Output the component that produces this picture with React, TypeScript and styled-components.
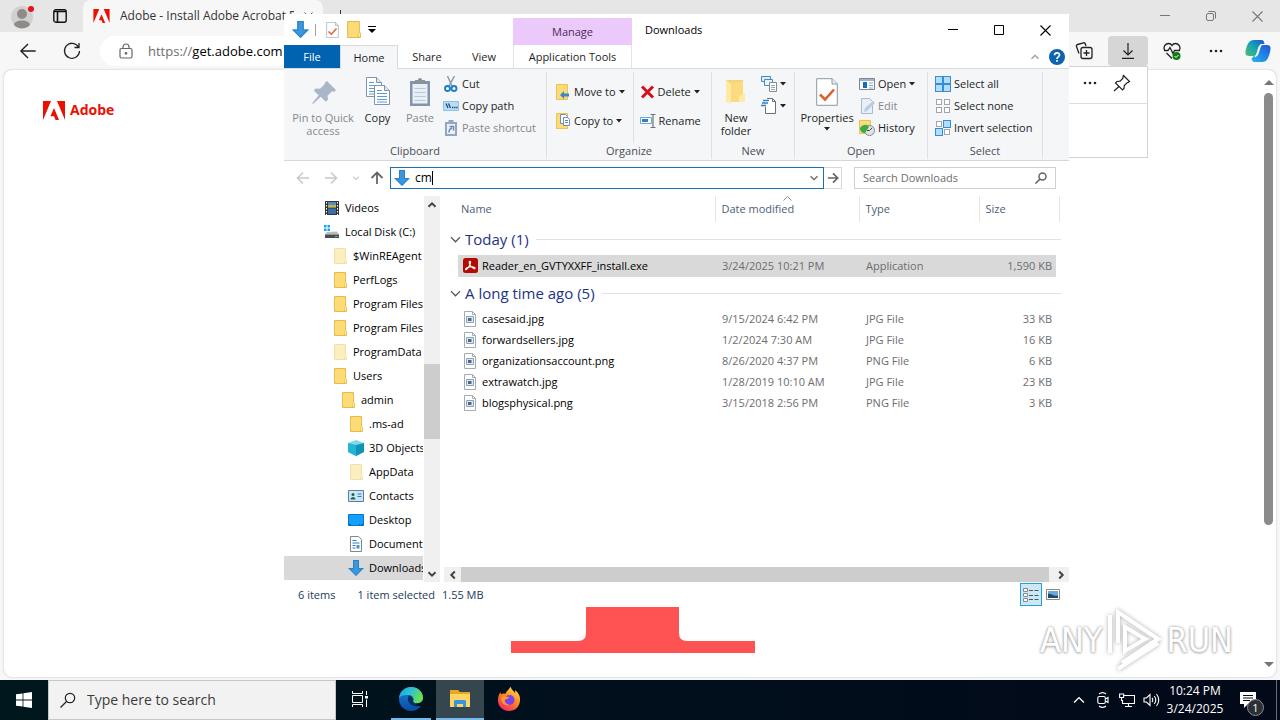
import React from 'react';
import styled, { createGlobalStyle, css } from 'styled-components';

const GlobalStyle = createGlobalStyle`
  *, *::before, *::after { box-sizing: border-box; }
  body { margin: 0; overflow: hidden; }
  body, button, input, table { font-family: 'Open Sans', 'Noto Sans', sans-serif; font-size: 11px; line-height: 14px; }
  button { border: 0; padding: 0; margin: 0; background: none; color: inherit; }
  input { border: 0; outline: 0; padding: 0; margin: 0; background: none; min-width: 0; }
  a { color: inherit; text-decoration: none; }
  svg { display: block; flex: none; }
`;

/* ---------- desktop ---------- */

const Desktop = styled.div`
  position: relative;
  display: flex;
  flex-direction: column;
  height: 100vh;
  overflow: hidden;
  background: #f3f3f5;
`;

/* ---------- browser ---------- */

const Browser = styled.section`
  flex: 1;
  min-height: 0;
  display: flex;
  flex-direction: column;
  background: #f7f7f7;
`;

const BrowserTitle = styled.header`
  display: flex;
  align-items: center;
  height: 32px;
  background: #e6e6e6;
`;

const TitleTools = styled.div`
  display: flex;
  align-items: center;
  gap: 18px;
  width: 83px;
  padding-left: 11px;
`;

const BrowserTab = styled.button`
  display: flex;
  align-items: center;
  gap: 10px;
  width: 240px;
  height: 32px;
  padding: 0 10px;
  border-radius: 8px 8px 0 0;
  background: #f7f7f7;
  color: #333;
  font-size: 12px;
  white-space: nowrap;
`;

const TabLabel = styled.span`
  flex: 1;
  overflow: hidden;
  text-align: left;
`;

const Plain = styled.button`
  display: flex;
  align-items: center;
  justify-content: center;
`;

const NewTab = styled(Plain)`
  width: 34px;
  height: 32px;
`;

const WindowControls = styled.div<{ $w: number; $end?: number }>`
  display: flex;
  margin-left: auto;
  padding-right: ${(p) => p.$end || 0}px;
  button { width: ${(p) => p.$w}px; height: 32px; }
`;

const BrowserBar = styled.div`
  display: flex;
  align-items: center;
  height: 38px;
  padding: 0 9px 0 16px;
`;

const BarGlyph = styled.span`
  display: flex;
  width: 44px;
  padding-left: 3px;
`;

const BarButton = styled(Plain)<{ $active?: boolean }>`
  width: 40px;
  height: 30px;
  border-radius: 4px;
  background: ${(p) => (p.$active ? '#d6d6d6' : 'transparent')};
`;

const BarButtons = styled.div`
  display: flex;
  gap: 4px;
  margin-right: 9px;
`;

const UrlPill = styled.label`
  flex: 1;
  display: flex;
  align-items: center;
  gap: 15px;
  height: 30px;
  margin: 0 50px 0 -4px;
  padding-left: 19px;
  border-radius: 15px;
  background: #fff;
  font-size: 13px;
  color: #000;
  i { font-style: normal; color: #6d6d6d; }
`;

const Page = styled.main`
  flex: 1;
  display: flex;
  margin: 0 4px 3px;
  border-radius: 8px;
  background: #fff;
  box-shadow: 0 0 2px #b5b5b5;
`;

const PageBody = styled.div`
  flex: 1;
  display: flex;
  flex-direction: column;
  justify-content: space-between;
  padding: 30px 0 24px;
`;

const AdobeLink = styled.a`
  display: flex;
  align-items: center;
  gap: 5px;
  padding-left: 39px;
  color: #eb1000;
  font-size: 14px;
  line-height: 20px;
  font-weight: 700;
`;

const Pedestal = styled.svg`
  align-self: center;
`;

const PageScroll = styled.div`
  display: flex;
  flex-direction: column;
  align-items: center;
  width: 15px;
  padding: 10px 0;
`;

const PageThumb = styled.div`
  width: 9px;
  height: 432px;
  margin: 8px 0 auto;
  border-radius: 5px;
  background: #8b8b8b;
`;

const Flyout = styled.aside`
  position: absolute;
  top: 66px;
  right: 132px;
  width: 360px;
  height: 92px;
  border: 1px solid #d4d4d4;
  background: #fff;
`;

const FlyoutHead = styled.div`
  display: flex;
  justify-content: flex-end;
  align-items: center;
  gap: 16px;
  height: 37px;
  padding: 0 16px 4px;
  border-bottom: 1px solid #dedede;
`;

/* ---------- explorer window ---------- */

const Explorer = styled.section`
  position: absolute;
  top: 14px;
  left: 284px;
  right: 211px;
  bottom: 113px;
  display: flex;
  flex-direction: column;
  background: #fff;
  color: #1e1e1e;
`;

const ExplorerTitle = styled.header`
  display: flex;
  align-items: stretch;
  height: 31px;
`;

const QuickAccess = styled.div`
  display: flex;
  align-items: center;
  width: 229px;
  padding-left: 8px;
  gap: 6px;
`;

const QuickRule = styled.span`
  width: 1px;
  height: 12px;
  background: #a5a5a5;
`;

const QuickIcon = styled.span`
  padding-left: 4px;
`;

const ManageTab = styled.div`
  width: 119px;
  margin-top: 4px;
  background: #ebc9fb;
  color: #4b2c58;
  line-height: 28px;
  text-align: center;
`;

const WindowName = styled.h1`
  margin: 0 0 0 13px;
  font-size: 11px;
  line-height: 31px;
  font-weight: 400;
  color: #000;
`;

const RibbonTabs = styled.nav`
  display: flex;
  align-items: stretch;
  height: 24px;
  border-bottom: 1px solid #dadbdc;
`;

const RibbonTab = styled.button<{ $w: number; $kind?: 'file' | 'open' | 'tool' }>`
  width: ${(p) => p.$w}px;
  padding-top: 1px;
  ${(p) => p.$kind === 'file' && css`background: #0063b1; color: #fff;`}
  ${(p) => p.$kind === 'open' && css`
    height: 24px;
    background: #f5f6f7;
    border: 1px solid #dadbdc;
    border-bottom: 0;
  `}
  ${(p) => p.$kind === 'tool' && css`
    margin-left: 1px;
    border: solid #e6e0ea;
    border-width: 0 1px;
  `}
`;

const RibbonEnd = styled.div`
  display: flex;
  align-items: center;
  gap: 9px;
  margin-left: auto;
  padding-right: 4px;
`;

const Ribbon = styled.div`
  display: flex;
  height: 92px;
  padding-top: 1px;
  border-bottom: 1px solid #d5d7d9;
  background: #f4f6f8;
`;

const Group = styled.section<{ $w: number }>`
  display: flex;
  flex-direction: column;
  width: ${(p) => p.$w}px;
  margin: 2px 0 1px;
  border-right: 1px solid #dfe1e4;
`;

const GroupBody = styled.div<{ $pad?: number; $gap?: number }>`
  flex: 1;
  display: flex;
  gap: ${(p) => p.$gap || 0}px;
  padding-left: ${(p) => p.$pad || 0}px;
`;

const GroupName = styled.h2`
  margin: 0;
  font-size: 11px;
  line-height: 16px;
  font-weight: 400;
  text-align: center;
  color: #4a4f56;
`;

const BigButton = styled.button<{ $w: number; $dim?: boolean }>`
  display: flex;
  flex-direction: column;
  align-items: center;
  width: ${(p) => p.$w}px;
  padding-top: 5px;
  line-height: 13px;
  white-space: nowrap;
  color: ${(p) => (p.$dim ? '#84888e' : '#1e1e1e')};
  svg:first-child { margin-bottom: 4px; }
`;

const CaretLine = styled.span`
  display: flex;
  align-items: center;
  height: 13px;
`;

const Stack = styled.div<{ $row?: number; $ruled?: boolean }>`
  display: flex;
  flex-direction: column;
  padding-top: ${(p) => (p.$row === 29 ? 5 : 1)}px;
  ${(p) => p.$ruled && css`padding-right: 8px; margin-right: 6px; border-right: 1px solid #dfe1e4;`}
  button { height: ${(p) => p.$row || 22}px; }
`;

const SmallButton = styled.button<{ $dim?: boolean }>`
  display: flex;
  align-items: center;
  gap: 3px;
  white-space: nowrap;
  color: ${(p) => (p.$dim ? '#84888e' : '#1e1e1e')};
`;

const AddressRow = styled.div`
  display: flex;
  align-items: center;
  height: 35px;
  padding: 0 13px 2px 0;
`;

const NavButtons = styled.div`
  display: flex;
  align-items: center;
  width: 106px;
  padding-left: 12px;
  gap: 14px;
  button:last-child { margin-left: -4px; }
`;

const AddressBox = styled.label`
  flex: 1;
  display: flex;
  align-items: center;
  gap: 5px;
  height: 22px;
  padding: 0 4px 0 3px;
  border: 1px solid #1a6fb5;
  input {
    flex: 1;
    height: 18px;
    font-size: 12px;
    color: #000;
    background: linear-gradient(#000, #000) 17px 2px / 1px 14px no-repeat;
  }
`;

const GoButton = styled(Plain)`
  width: 18px;
  height: 22px;
  border: 1px solid #d9d9d9;
  border-left: 0;
`;

const SearchBox = styled.label`
  display: flex;
  align-items: center;
  width: 202px;
  height: 22px;
  margin-left: 12px;
  padding: 0 8px;
  border: 1px solid #d0d0d0;
  input { flex: 1; }
  input::placeholder { color: #6d6d6d; opacity: 1; }
`;

const Panes = styled.div`
  flex: 1;
  min-height: 0;
  display: flex;
`;

const Tree = styled.nav`
  width: 140px;
  overflow: hidden;
`;

const TreeItem = styled.a<{ $level: number; $on?: boolean }>`
  display: flex;
  align-items: center;
  gap: 5px;
  height: 24px;
  margin-right: 1px;
  padding-left: ${(p) => 40 + p.$level * 8}px;
  overflow: hidden;
  white-space: nowrap;
  color: #000;
  background: ${(p) => (p.$on ? '#d9d9d9' : 'transparent')};
`;

const IconSlot = styled.span`
  display: flex;
  justify-content: center;
  flex: none;
  width: 16px;
`;

const VScroll = styled.div`
  display: flex;
  flex-direction: column;
  justify-content: space-between;
  align-items: center;
  width: 16px;
  margin-right: 4px;
  background: #f0f0f0;
  button { width: 16px; height: 17px; }
`;

const VThumb = styled.div`
  width: 16px;
  height: 75px;
  margin: 151px 0 auto;
  background: #cdcdcd;
`;

const Files = styled.div`
  flex: 1;
  min-width: 0;
  display: flex;
  flex-direction: column;
  justify-content: space-between;
`;

const FileTable = styled.table`
  width: 100%;
  table-layout: fixed;
  border-collapse: collapse;
  td, th { padding: 0; font-weight: 400; text-align: left; white-space: nowrap; }
`;

const HeadRow = styled.tr`
  height: 26px;
  color: #4c607a;
  th { position: relative; padding-left: 6px; border-right: 1px solid #e5e5e5; }
  th:nth-child(2) { padding-left: 3px; }
  th:first-child { border: 0; }
  th:last-child { border: 0; background: linear-gradient(#e5e5e5, #e5e5e5) 3px 0 / 1px 100% no-repeat; }
`;

const BareHead = styled.th`
  && { border-right: 0; }
`;

const SortMark = styled.svg`
  position: absolute;
  top: 0;
  left: 50%;
  margin-left: -4px;
`;

const GroupRow = styled.tr<{ $h: number }>`
  height: ${(p) => p.$h}px;
  color: #1e3287;
`;

const GroupLine = styled.button`
  display: flex;
  align-items: center;
  gap: 3px;
  width: 100%;
  padding: 1px 8px 0 5px;
  font-size: 15px;
  line-height: 20px;
  &::after { content: ''; flex: 1; height: 1px; margin-left: 4px; background: #e2e2e2; }
`;

const FileRow = styled.tr<{ $on?: boolean }>`
  height: ${(p) => (p.$on ? 22 : 21)}px;
  color: #6d6d6d;
  td:nth-child(n + 3) { padding-left: 7px; }
  td:nth-child(2) { padding-left: 4px; color: #000; }
  td:nth-child(5) { padding: 0 4px 0 0; text-align: right; }
  td:nth-child(n + 2):nth-child(-n + 5) { background: ${(p) => (p.$on ? '#d9d9d9' : 'transparent')}; }
`;

const FileName = styled.span`
  display: flex;
  align-items: center;
  gap: 4px;
`;

const HScroll = styled.div`
  display: flex;
  height: 15px;
  background: #f0f0f0;
  button { width: 17px; }
`;

const HThumb = styled.div`
  flex: 1;
  margin-right: 3px;
  background: #cdcdcd;
`;

const Status = styled.footer`
  display: flex;
  align-items: center;
  height: 25px;
  padding: 0 9px 0 14px;
  color: #1e395b;
  span { margin-right: 7px; }
  span:first-child { margin-right: 22px; }
`;

const ViewButtons = styled.div`
  display: flex;
  align-items: center;
  gap: 4px;
  margin-left: auto;
`;

const ViewButton = styled(Plain)<{ $on?: boolean }>`
  width: ${(p) => (p.$on ? 22 : 14)}px;
  height: 23px;
  border: ${(p) => (p.$on ? '1px solid #26a0da' : '0')};
  background: ${(p) => (p.$on ? '#cbe8f6' : 'none')};
`;

/* ---------- watermark ---------- */

const Watermark = styled.div`
  position: absolute;
  right: 47px;
  bottom: 47px;
  display: flex;
  align-items: center;
  gap: 5px;
  color: #fff;
  font-family: 'Liberation Sans Narrow', 'DejaVu Sans Condensed', sans-serif;
  font-size: 34px;
  line-height: 66px;
  text-shadow: 0 0 3px #999, 0 1px 3px #bbb;
  svg { filter: drop-shadow(0 0 2px #aaa); }
`;

/* ---------- taskbar ---------- */

const Taskbar = styled.footer`
  display: flex;
  height: 40px;
  background: linear-gradient(90deg, #00171e, #010f1c 50%, #020919);
  color: #fff;
`;

const Tasks = styled.div`
  display: flex;
  gap: 1px;
  button:first-child { margin-right: 2px; }
`;

const TaskButton = styled(Plain)<{ $state?: 'running' | 'active' }>`
  width: 48px;
  border-bottom: 2px solid transparent;
  ${(p) => p.$state === 'running' && css`
    background: linear-gradient(#76b9ed, #76b9ed) 50% 100% / 40px 2px no-repeat border-box;
  `}
  ${(p) => p.$state === 'active' && css`background: #36464f; border-bottom-color: #76b9ed;`}
`;

const StartButton = styled(Plain)`
  width: 48px;
`;

const TaskSearch = styled.label`
  display: flex;
  align-items: center;
  gap: 11px;
  width: 288px;
  padding-left: 11px;
  border: 1px solid #c4c6c7;
  background: #f2f2f2;
  input { flex: 1; font-size: 14px; line-height: 20px; }
  input::placeholder { color: #3c3c3c; opacity: 1; }
`;

const Tray = styled.div`
  display: flex;
  align-items: center;
  margin-left: auto;
  button { width: 24px; height: 40px; }
`;

const Clock = styled.time`
  width: 64px;
  font-size: 12px;
  line-height: 18px;
  text-align: center;
  white-space: nowrap;
`;

const Notice = styled(Plain)`
  position: relative;
  && { width: 41px; margin-right: 8px; }
`;

const Badge = styled.span`
  position: absolute;
  right: 4px;
  bottom: 4px;
  width: 17px;
  height: 17px;
  border: 1px solid #8a8f94;
  border-radius: 50%;
  background: #2a3036;
  font-size: 11px;
  line-height: 15px;
`;

const ShowDesktop = styled.div`
  width: 4px;
  height: 40px;
  border-left: 1px solid #6a6f76;
`;

/* ---------- icons ---------- */

const Caret = ({ w = 6 }: { w?: number }) => (
  <svg width={w} height="4" viewBox="0 0 6 4"><path d="M0 0h6L3 3.5z" fill="#222" /></svg>
);

const Chevron = ({ turn = 0, color = '#444', size = 10, stroke = 2 }: { turn?: number; color?: string; size?: number; stroke?: number }) => (
  <svg width={size} height={size} viewBox="0 0 10 10">
    <path d="M1.5 3.2 5 6.7l3.5-3.5" fill="none" stroke={color} strokeWidth={stroke} transform={`rotate(${turn} 5 5)`} />
  </svg>
);

const AdobeMark = ({ w, h }: { w: number; h: number }) => (
  <svg width={w} height={h} viewBox="0 0 22 19">
    <path d="M0 0h8L0 19zM14 0h8v19zM11 7l5 12h-3.4L11 15.2H7.4z" fill="#eb1000" />
  </svg>
);

const Folder = ({ pale, w = 16 }: { pale?: boolean; w?: number }) => (
  <svg width={w} height={w} viewBox="0 0 16 16">
    <path d="M2.5.5h11v10l.9 1v4H2.500z" fill={pale ? '#fbeebf' : '#fddc77'} stroke={pale ? '#efdfa8' : '#e6bb48'} />
    <path d="M12.500 15V11.500l1-1 1 1V15z" fill={pale ? '#fff6d8' : '#ffedad'} stroke={pale ? '#efdfa8' : '#e6bb48'} strokeWidth=".7" />
  </svg>
);

const DownArrow = ({ w = 16 }: { w?: number }) => (
  <svg width={w} height={w} viewBox="0 0 16 16">
    <path d="M5 0h6v8h5l-8 8-8-8h5z" fill="#3a96dd" />
    <path d="M5.500.5h5v8h4.200L8 15.300 1.300 8.500h4.200z" fill="none" stroke="#2b7fc4" />
  </svg>
);

const CheckPage = ({ w, h }: { w: number; h: number }) => (
  <svg width={w} height={h} viewBox="0 0 22 28">
    <path d="M.7.7h15.500l5.100 5.100v21.500H.7z" fill="#fff" stroke="#8b98a6" />
    <path d="M16 .7v5.300h5.300" fill="#e8edf2" stroke="#8b98a6" />
    <path d="m4 16.500 5 5 9-10" fill="none" stroke="#e2602f" strokeWidth="2.600" />
  </svg>
);

const PinBig = () => (
  <svg width="32" height="30" viewBox="0 0 32 30">
    <path d="m20 4 9 9-2 2-2-.8-4.500 4.500.5 4-2.200 2-5-5L6 27l-.8-.8 6.500-8-5-4.800 2-2 4.300.4 4.600-4.500L18 5.500z" fill="#a9b6c9" />
  </svg>
);

const Sheet = ({ x, y }: { x: number; y: number }) => (
  <g transform={`translate(${x} ${y})`}>
    <path d="M.5.5h10l5 5v14H.5z" fill="#fff" stroke="#7e95ad" />
    <path d="M10.500.5v5h5" fill="#dbe6f1" stroke="#7e95ad" />
    <path d="M3 5.500h5M3 8.500h10M3 11.500h10M3 14.500h10M3 17h10" stroke="#5f9bd6" />
  </g>
);

const CopyBig = () => (
  <svg width="26" height="30" viewBox="0 0 26 30"><Sheet x={1} y={0} /><Sheet x={9} y={8} /></svg>
);

const PasteBig = () => (
  <svg width="22" height="30" viewBox="0 0 22 30">
    <path d="M1 4h20v25H1z" fill="#8395ae" />
    <path d="M3.500 7h15v19.500h-15z" fill="#e8eef6" />
    <path d="M6 3h3a2 2 0 0 1 4 0h3v4H6z" fill="#8a9199" />
    <path d="M5.500 11.500h11M5.500 15.500h11M5.500 19.500h11M5.500 23.500h11" stroke="#b9c8dc" />
  </svg>
);

const FolderBig = () => (
  <svg width="24" height="30" viewBox="0 0 24 30">
    <path d="M2 3h17v22H2z" fill="#f6d278" />
    <path d="M2 3l5 4v20l-5-3z" fill="#ffe9a6" />
    <path d="M7 5h12v20H7z" fill="#fcdb80" />
    <path d="M15 25v-6l6-3v9z" fill="#ffe9a6" />
  </svg>
);

const Scissors = () => (
  <svg width="16" height="16" viewBox="0 0 16 16">
    <path d="M4.500 0 9 10M11.500 0 6 10" stroke="#8d9aa8" strokeWidth="1.500" />
    <circle cx="4.500" cy="12.500" r="2.500" fill="none" stroke="#1d7fc4" strokeWidth="1.900" />
    <circle cx="11" cy="12.500" r="2.500" fill="none" stroke="#1d7fc4" strokeWidth="1.900" />
  </svg>
);

const CopyPath = () => (
  <svg width="16" height="16" viewBox="0 0 16 16">
    <path d="M.5 3.500h15v9H.5z" fill="#b9dcf6" stroke="#8fc0e8" />
    <path d="m3 5.500 2 4.500M5.500 5.500l2 4.500" stroke="#15456f" strokeWidth="1.200" />
    <path d="M9 9.500h1.300M11.200 9.500h1.300M13.300 9.500h1.300" stroke="#15456f" strokeWidth="1.500" />
  </svg>
);

const PasteLink = () => (
  <svg width="16" height="16" viewBox="0 0 16 16">
    <path d="M2 2h12v14H2z" fill="#93a5bf" /><path d="M4 4h8v10H4z" fill="#eef2f8" />
    <path d="M5.500 0h5v3.500h-5z" fill="#93a5bf" />
    <path d="M6 12.500C6 9.500 7 8.500 9 8M6.500 6.500h4v4" fill="none" stroke="#6d89b5" strokeWidth="1.500" />
  </svg>
);

const MoveTo = () => (
  <svg width="16" height="18" viewBox="0 0 16 18">
    <path d="M1.500 1.500h11v15h-11z" fill="#fddc77" stroke="#e9c35a" />
    <path d="m5 12 4-4v2.500h5v3H9V16z" fill="#3a86c8" />
  </svg>
);

const CopyTo = () => (
  <svg width="16" height="18" viewBox="0 0 16 18">
    <path d="M1.500 1.500h11v15h-11z" fill="#fddc77" stroke="#e9c35a" />
    <path d="M5.500 2.500h5l2 2v7h-7z" fill="#fff" stroke="#6f8fb5" />
    <path d="M8.500 5.500h4l2 2v6h-6z" fill="#fff" stroke="#6f8fb5" />
    <path d="M10 8.500h3M10 10.500h3" stroke="#4a8ac9" />
  </svg>
);

const RedCross = () => (
  <svg width="15" height="14" viewBox="0 0 15 14"><path d="m2 1.500 11 11M13 1.500l-11 11" stroke="#d4111b" strokeWidth="3" /></svg>
);

const Rename = () => (
  <svg width="16" height="16" viewBox="0 0 16 16">
    <path d="M.5 4.500h11v6H.5z" fill="#fff" stroke="#6fa6d6" /><path d="M2 6h6v3H2z" fill="#2d7fc7" />
    <path d="M10.500 1.500h5M10.500 14.500h5M13 1.500v13" stroke="#6b7680" strokeWidth="1.200" />
  </svg>
);

const NewItem = () => (
  <svg width="16" height="16" viewBox="0 0 16 16">
    <path d="M.5.500h9v5h-9z" fill="#dcecf8" stroke="#4a8ab8" /><path d="M3.500 3.500h8v6h-8z" fill="#eaf3fa" stroke="#4a8ab8" />
    <path d="M8.500 6.500h7v9h-7z" fill="#fff" stroke="#808a94" /><path d="M10 9.500h4M10 11.500h4M10 13.500h4" stroke="#9aa6b2" />
  </svg>
);

const EasyAccess = () => (
  <svg width="16" height="16" viewBox="0 0 16 16">
    <path d="M4.500.5h7l3 3v11h-10z" fill="#fff" /><path d="M6 .5h5.500l3 3v12H4.500V9M11.500.5v3h3" fill="none" stroke="#66717c" />
    <path d="M2 2.500h6M1 5h6M0 7.500h5" stroke="#2d7fc7" strokeWidth="1.300" />
  </svg>
);

const OpenIcon = () => (
  <svg width="16" height="16" viewBox="0 0 16 16">
    <path d="M.5 2.500h15v11H.5z" fill="#fff" stroke="#7d8792" /><path d="M1 3h14v2H1z" fill="#9db4cc" />
    <path d="M4 6h4v6H4z" fill="#0f6fc6" /><path d="M10 7h4M10 9.500h4M10 12h4" stroke="#7fa3c7" />
  </svg>
);

const EditIcon = () => (
  <svg width="16" height="16" viewBox="0 0 16 16">
    <path d="M2.500.5h8l3 3v12h-11z" fill="#e9eff7" stroke="#a9b9d0" /><path d="m5 14 1-4 8-7 2 2-8 8z" fill="#bccbe2" />
  </svg>
);

const HistoryIcon = () => (
  <svg width="16" height="16" viewBox="0 0 16 16">
    <path d="M.5.5h11v13H.5z" fill="#fddc77" stroke="#e9c35a" /><circle cx="10.500" cy="10.500" r="5" fill="#dfe3e6" stroke="#808a90" />
    <path d="M1 8c3-4 7-4 9-1l-4 6C3 13 1 11 1 8z" fill="#3bab4a" /><path d="M10.500 10.500 13 8M10.500 10.500H8" stroke="#444" />
  </svg>
);

const Squares = ({ on }: { on: boolean[] }) => (
  <svg width="16" height="16" viewBox="0 0 16 16">
    {on.map((s, i) => {
      const x = (i % 2) * 8;
      const y = Math.floor(i / 2) * 8;
      return s
        ? <rect key={i} x={x + 0.5} y={y + 0.5} width="7" height="7" fill="#b8dcf8" stroke="#2f8fdd" />
        : <rect key={i} x={x + 1.5} y={y + 1.5} width="5" height="5" fill="#fff" stroke="#a0a6ac" />;
    })}
  </svg>
);

const Arrow = ({ turn = 0, color, s = 14, w = 1.5 }: { turn?: number; color: string; s?: number; w?: number }) => (
  <svg width={s} height={s} viewBox="0 0 14 14">
    <path d="M13 7H1.500M7 1.500 1.500 7 7 12.500" fill="none" stroke={color} strokeWidth={w} transform={`rotate(${turn} 7 7)`} />
  </svg>
);

const Glass = ({ s, color, w }: { s: number; color: string; w: number }) => (
  <svg width={s} height={s} viewBox="0 0 16 16">
    <circle cx="10" cy="6" r="4.700" fill="none" stroke={color} strokeWidth={w} /><path d="m6.500 9.500-6 6" stroke={color} strokeWidth={w} />
  </svg>
);

const Dots = ({ color = '#222' }: { color?: string }) => (
  <svg width="14" height="4" viewBox="0 0 14 4"><g fill={color}><circle cx="2" cy="2" r="1.300" /><circle cx="7" cy="2" r="1.300" /><circle cx="12" cy="2" r="1.300" /></g></svg>
);

const Cross = ({ s = 11, color = '#000' }: { s?: number; color?: string }) => (
  <svg width={s} height={s} viewBox="0 0 11 11"><path d="m.5.5 10 10m0-10-10 10" stroke={color} strokeWidth="1.100" /></svg>
);

const Minus = ({ color = '#000' }: { color?: string }) => (
  <svg width="10" height="10" viewBox="0 0 10 10"><path d="M0 4.500h10" stroke={color} /></svg>
);

const Video = () => (
  <svg width="16" height="16" viewBox="0 0 16 16">
    <path d="M1 1h14v14H1z" fill="#333" /><path d="M4 2h8v5.500H4z" fill="#4e8ad0" /><path d="M4 8.500h8V14H4z" fill="#3b6ea8" />
    <path d="M4 6c3-3 5 1 8-2v3.500H4z" fill="#d2b33c" />
    <path d="M2.500 2v13M13.500 2v13" stroke="#fff" strokeDasharray="1.500 1.500" />
  </svg>
);

const Disk = () => (
  <svg width="16" height="16" viewBox="0 0 16 16">
    <path d="M0 1h2.500v2.500H0zM3.500 1H6v2.500H3.500zM0 4.500h2.500V7H0zM3.500 4.500H6V7H3.500z" fill="#18a6e0" />
    <path d="m3 8 10-.5 2 3H1z" fill="#b8bcc0" /><path d="M1 10.500h14V14H1z" fill="#4a4d50" /><path d="M11 12h2.500v1H11z" fill="#57d657" />
  </svg>
);

const Cube = () => (
  <svg width="18" height="16" viewBox="0 0 18 16">
    <path d="m1 3 8-3 8 3v9l-8 4-8-4z" fill="#7adcea" /><path d="m1 3 8 2v11l-8-4z" fill="#24b3d3" /><path d="m9 5 8-2v9l-8 4z" fill="#0f93b7" />
  </svg>
);

const Contacts = () => (
  <svg width="16" height="16" viewBox="0 0 16 16">
    <path d="M.5 2.500h15v11H.5z" fill="#c9e6f8" stroke="#5c7f9b" /><circle cx="5" cy="6.500" r="1.500" fill="#2e5c4b" />
    <path d="M2.500 11.500c0-3.500 5-3.500 5 0z" fill="#2e5c4b" /><path d="M9.500 6h4M9.500 8.500h4" stroke="#2f7fc0" />
  </svg>
);

const DesktopIcon = () => (
  <svg width="16" height="16" viewBox="0 0 16 16">
    <path d="M.5 2.500h15v11H.5z" fill="#12a0ff" stroke="#0a76c8" /><path d="M1 12.500h14" stroke="#0b62a6" strokeDasharray="2 8 1 1" />
  </svg>
);

const DocIcon = () => (
  <svg width="16" height="16" viewBox="0 0 16 16">
    <path d="M2.500.5h8l3 3v12h-11z" fill="#fff" stroke="#7c8894" />
    <path d="M4.500 4.500h4M4.500 7h7M4.500 9.500h3M4.500 12h3" stroke="#2d7fb8" strokeWidth="1.200" /><path d="M8.500 9h3v3.500h-3z" fill="#4a94bf" />
  </svg>
);

const ImageFile = () => (
  <svg width="16" height="16" viewBox="0 0 16 16">
    <path d="M2.500.5h8l3 3v12h-11z" fill="#fff" stroke="#a3abb3" /><path d="M10.500.5v3h3" fill="none" stroke="#a3abb3" />
    <path d="M4.500 5.500h7v6h-7z" fill="#dfe9f4" stroke="#8fa0b6" /><path d="M6 7h3.500v3H6z" fill="#4a678f" />
  </svg>
);

const Acrobat = () => (
  <svg width="16" height="16" viewBox="0 0 16 16">
    <rect x="1" width="15" height="15" rx="2.500" fill="#b30b00" />
    <path d="M8 3.200c1.500 0 0 4-1.500 6S3.500 12.500 3.500 11.300 7 9 9.500 8.800s4 .7 3.500 1.700S9 9 7.800 6.500 7.300 3.200 8 3.200z" fill="none" stroke="#fff" strokeWidth="1.100" />
  </svg>
);

const EdgeLogo = () => (
  <svg width="26" height="26" viewBox="0 0 26 26">
    <defs>
      <linearGradient id="eg" x1="0" y1="0" x2="1" y2=".4"><stop offset="0" stopColor="#1b9de2" /><stop offset=".5" stopColor="#2cc3d5" /><stop offset="1" stopColor="#6be04f" /></linearGradient>
      <linearGradient id="eb" x1="0" y1="0" x2="0" y2="1"><stop offset="0" stopColor="#1583d8" /><stop offset="1" stopColor="#0c4ba5" /></linearGradient>
    </defs>
    <circle cx="13" cy="13" r="12" fill="url(#eb)" />
    <path d="M1 12C2 5 7 1 13 1c7 0 12 5 12 10.500 0 4-3 6-6.500 6-3 0-4-1.200-3.500-2 1.500-2 .5-6-4-6.500C6.500 8.500 2.500 9.500 1 12z" fill="url(#eg)" />
    <path d="M11 9.500c-3 4 0 11 8 11 2 0 4-.8 4.500-1.300L25 15c-2 3-10 4-10.200.6C16 14 15 10 11 9.500z" fill="#082f63" />
    <path d="M15 15.500c-.5 1 1 2 3.500 2 3 0 5.500-1.500 6.500-3.500v6h-5z" fill="#01141d" />
  </svg>
);

const FolderTask = () => (
  <svg width="24" height="20" viewBox="0 0 24 20">
    <path d="M2 1h8l2 2h10v6H2z" fill="#e9a820" /><path d="M2 5h20v13H2z" fill="#ffd663" />
    <path d="M6 18v-6l1-1h10l1 1v6h-3v-3H9v3z" fill="#3a93dd" />
  </svg>
);

const Firefox = () => (
  <svg width="24" height="24" viewBox="0 0 24 24">
    <defs><linearGradient id="ff" x1=".8" y1="0" x2=".2" y2="1"><stop offset="0" stopColor="#ffe14a" /><stop offset=".45" stopColor="#ff8a1f" /><stop offset="1" stopColor="#f0206b" /></linearGradient></defs>
    <path d="M12 2c1-2 2-2 2-2 0 3 3 3.500 4 6 .5-1.500 0-2 0-3 3.500 3 5.500 6 5 10.500C22.500 20 18 24 12 24S1 19.500 1 13.500c0-4 1-6 2.500-8.500 0 1 .3 2 .8 2.500C5.500 6 7 6.500 8.500 6.700 9.500 4 10.800 3.500 12 2z" fill="url(#ff)" />
    <circle cx="12.500" cy="13" r="5" fill="#7b3ff2" /><path d="M4.500 10c3-1.500 6 0 8 .5-2 2-4 1-5 3 0 2 2 4 5 4-4 2-9-1-8-7.500z" fill="#ff9a28" />
  </svg>
);

const Copilot = () => (
  <svg width="26" height="24" viewBox="0 0 26 24">
    <defs>
      <linearGradient id="c1" x1="0" y1="1" x2="1" y2="0"><stop offset="0" stopColor="#52c063" /><stop offset=".5" stopColor="#16a3b8" /><stop offset="1" stopColor="#1558d0" /></linearGradient>
      <linearGradient id="c2" x1="0" y1="1" x2="1" y2="0"><stop offset="0" stopColor="#1fb8f0" /><stop offset="1" stopColor="#2354d8" /></linearGradient>
    </defs>
    <path d="M17 23H9.500c-2 0-2.500-1.500-3-3.500L9 17c3 0 4-2 5-5.500s2-5.500 5-5.500h3c4 0 4 3 3 7-1.500 6-3 10-8 10z" fill="url(#c2)" />
    <path d="M9 1h7.500c2 0 2.500 1.500 3 4H18c-3 0-4 2-5 6s-2 6-5 6H4c-4 0-4-3-3-7C2.500 5 4 1 9 1z" fill="url(#c1)" />
    <path d="M13 11c.8-3 1.500-4.500 3-5.500-1 2.500-1.800 6-2.500 8-.8 2.500-2 4-3.500 4.500 1.500-1.500 2.200-4 3-7z" fill="#f7f7f7" stroke="#f7f7f7" />
  </svg>
);

/* ---------- data ---------- */

const tree: { name: string; level: number; icon: React.ReactNode; on?: boolean }[] = [
  { name: 'Videos', level: 0, icon: <Video /> },
  { name: 'Local Disk (C:)', level: 0, icon: <Disk /> },
  { name: '$WinREAgent', level: 1, icon: <Folder pale /> },
  { name: 'PerfLogs', level: 1, icon: <Folder /> },
  { name: 'Program Files', level: 1, icon: <Folder /> },
  { name: 'Program Files (x86)', level: 1, icon: <Folder /> },
  { name: 'ProgramData', level: 1, icon: <Folder pale /> },
  { name: 'Users', level: 1, icon: <Folder /> },
  { name: 'admin', level: 2, icon: <Folder /> },
  { name: '.ms-ad', level: 3, icon: <Folder /> },
  { name: '3D Objects', level: 3, icon: <Cube /> },
  { name: 'AppData', level: 3, icon: <Folder pale /> },
  { name: 'Contacts', level: 3, icon: <Contacts /> },
  { name: 'Desktop', level: 3, icon: <DesktopIcon /> },
  { name: 'Documents', level: 3, icon: <DocIcon /> },
  { name: 'Downloads', level: 3, icon: <DownArrow />, on: true },
];

const older = [
  ['casesaid.jpg', '9/15/2024 6:42 PM', 'JPG File', '33 KB'],
  ['forwardsellers.jpg', '1/2/2024 7:30 AM', 'JPG File', '16 KB'],
  ['organizationsaccount.png', '8/26/2020 4:37 PM', 'PNG File', '6 KB'],
  ['extrawatch.jpg', '1/28/2019 10:10 AM', 'JPG File', '23 KB'],
  ['blogsphysical.png', '3/15/2018 2:56 PM', 'PNG File', '3 KB'],
];

/* ---------- parts ---------- */

function BrowserWindow() {
  return (
    <Browser>
      <BrowserTitle>
        <TitleTools>
          <Plain aria-label="Profile">
            <svg width="24" height="28" viewBox="0 0 24 28">
              <circle cx="11" cy="15" r="11" fill="#d2d0ce" /><circle cx="11" cy="12" r="5" fill="#8f8b88" />
              <path d="M3 23c0-6 16-6 16 0-4 4.500-12 4.500-16 0z" fill="#8f8b88" /><circle cx="20" cy="7" r="3" fill="#e3121c" />
            </svg>
          </Plain>
          <Plain aria-label="Tab actions">
            <svg width="14" height="14" viewBox="0 0 14 14">
              <rect x=".8" y=".8" width="12.400" height="12.400" rx="2" fill="none" stroke="#111" strokeWidth="1.400" />
              <path d="M1 2.500h12M4.500 3v10" stroke="#111" strokeWidth="1.600" />
            </svg>
          </Plain>
        </TitleTools>
        <BrowserTab>
          <AdobeMark w={17} h={14} />
          <TabLabel>Adobe - Install Adobe Acrobat Reader</TabLabel>
          <Cross s={9} color="#555" />
        </BrowserTab>
        <NewTab aria-label="New tab">
          <svg width="12" height="12" viewBox="0 0 12 12"><path d="M6.500 0v12M0 6h12" stroke="#333" /></svg>
        </NewTab>
        <WindowControls $w={46}>
          <Plain aria-label="Minimize"><Minus color="#777" /></Plain>
          <Plain aria-label="Restore">
            <svg width="10" height="10" viewBox="0 0 10 10" fill="none" stroke="#777"><rect x=".5" y="2.500" width="7" height="7" rx="1.500" /><path d="M2.500.5H8A1.500 1.500 0 0 1 9.500 2v5.500" /></svg>
          </Plain>
          <Plain aria-label="Close"><Cross color="#777" /></Plain>
        </WindowControls>
      </BrowserTitle>
      <BrowserBar>
        <Plain aria-label="Back"><BarGlyph><Arrow s={18} w={1.1} color="#222" /></BarGlyph></Plain>
        <Plain aria-label="Refresh">
          <BarGlyph>
            <svg width="18" height="18" viewBox="0 0 18 18"><path d="M15.500 5A7.500 7.500 0 1 0 16.500 9M16 1v4.500h-4.500" fill="none" stroke="#222" strokeWidth="1.300" /></svg>
          </BarGlyph>
        </Plain>
        <UrlPill>
          <svg width="14" height="16" viewBox="0 0 14 16" fill="none" stroke="#666" strokeWidth="1.200">
            <rect x="1" y="5.500" width="12" height="9.500" rx="1.500" /><path d="M4 5.500V4a3 3 0 0 1 6 0v1.500" /><circle cx="7" cy="10.300" r=".8" fill="#666" />
          </svg>
          <span><i>https://</i>get.adobe.com</span>
        </UrlPill>
        <BarButtons>
          <BarButton aria-label="Collections">
            <svg width="18" height="18" viewBox="0 0 18 18" fill="none" stroke="#222" strokeWidth="1.300">
              <path d="M4 11.500 1.500 4.500A1.500 1.500 0 0 1 2.500 2.500l6-1.700a1.500 1.500 0 0 1 1.800 1L11 4" /><rect x="6" y="5.500" width="11" height="11" rx="2" /><path d="M11.500 8v6M8.500 11h6" />
            </svg>
          </BarButton>
          <BarButton $active aria-label="Downloads">
            <svg width="14" height="16" viewBox="0 0 14 16" fill="none" stroke="#222" strokeWidth="1.200"><path d="M7 0v12M2.500 7.500 7 12l4.500-4.500M1 15.300h12" /></svg>
          </BarButton>
          <BarButton aria-label="Browser essentials">
            <svg width="18" height="18" viewBox="0 0 18 18" fill="none" stroke="#222" strokeWidth="1.300">
              <path d="M1.500 8C0 4 3 1.500 5.500 1.500 7 1.500 8.300 2.200 9 3.500c.7-1.300 2-2 3.500-2C15 1.500 18 4 16.500 8M1 8.500h4l2-3 3 6 1.500-3H17M3.500 11l5.500 5.500" />
              <circle cx="13.500" cy="14" r="4" fill="#107c10" stroke="none" /><path d="m11.500 14 1.500 1.500 2.500-2.500" stroke="#fff" strokeWidth="1" />
            </svg>
          </BarButton>
          <BarButton aria-label="Settings and more"><Dots /></BarButton>
        </BarButtons>
        <Plain aria-label="Copilot"><Copilot /></Plain>
      </BrowserBar>
      <Page>
        <PageBody>
          <AdobeLink href="#"><AdobeMark w={22} h={19} />Adobe</AdobeLink>
          <Pedestal width="244" height="46" viewBox="0 0 244 46">
            <path d="M75 0h93v26q0 8 8 8h68v12H0V34h67q8 0 8-8z" fill="#ff5252" />
          </Pedestal>
        </PageBody>
        <PageScroll>
          <svg width="10" height="5" viewBox="0 0 10 5"><path d="M0 5h10L5 0z" fill="#777" /></svg>
          <PageThumb />
          <svg width="10" height="5" viewBox="0 0 10 5"><path d="M0 0h10L5 5z" fill="#777" /></svg>
        </PageScroll>
      </Page>
      <Flyout>
        <FlyoutHead>
          <Plain aria-label="More options"><Dots /></Plain>
          <Plain aria-label="Pin">
            <svg width="18" height="18" viewBox="0 0 18 18" fill="none" stroke="#222" strokeWidth="1.200"><path d="m10.500 1.500 6 6-1.200 1-1 0-3 3-.3 3L9.500 16 2.500 9 4 7.500l3-.3 3-3V2.500zM6 12.500 1 17" /></svg>
          </Plain>
        </FlyoutHead>
      </Flyout>
    </Browser>
  );
}

function RibbonPanel() {
  return (
    <Ribbon>
      <Group $w={263}>
        <GroupBody $pad={4}>
          <BigButton $w={70} $dim><PinBig />Pin to Quick<br />access</BigButton>
          <BigButton $w={39}><CopyBig />Copy</BigButton>
          <BigButton $w={46} $dim><PasteBig />Paste</BigButton>
          <Stack>
            <SmallButton><Scissors />Cut</SmallButton>
            <SmallButton><CopyPath />Copy path</SmallButton>
            <SmallButton $dim><PasteLink />Paste shortcut</SmallButton>
          </Stack>
        </GroupBody>
        <GroupName>Clipboard</GroupName>
      </Group>
      <Group $w={165}>
        <GroupBody $pad={8}>
          <Stack $row={29} $ruled>
            <SmallButton><MoveTo />Move to <Caret /></SmallButton>
            <SmallButton><CopyTo />Copy to <Caret /></SmallButton>
          </Stack>
          <Stack $row={29}>
            <SmallButton><RedCross />Delete <Caret /></SmallButton>
            <SmallButton><Rename />Rename</SmallButton>
          </Stack>
        </GroupBody>
        <GroupName>Organize</GroupName>
      </Group>
      <Group $w={83}>
        <GroupBody $pad={1} $gap={2}>
          <BigButton $w={46}><FolderBig />New<br />folder</BigButton>
          <Stack>
            <SmallButton aria-label="New item"><NewItem /><Caret /></SmallButton>
            <SmallButton aria-label="Easy access"><EasyAccess /><Caret /></SmallButton>
          </Stack>
        </GroupBody>
        <GroupName>New</GroupName>
      </Group>
      <Group $w={133}>
        <GroupBody $pad={2} $gap={2}>
          <BigButton $w={60}><CheckPage w={22} h={30} />Properties<CaretLine><Caret /></CaretLine></BigButton>
          <Stack>
            <SmallButton><OpenIcon />Open <Caret /></SmallButton>
            <SmallButton $dim><EditIcon />Edit</SmallButton>
            <SmallButton><HistoryIcon />History</SmallButton>
          </Stack>
        </GroupBody>
        <GroupName>Open</GroupName>
      </Group>
      <Group $w={115}>
        <GroupBody $pad={7}>
          <Stack>
            <SmallButton><Squares on={[true, true, true, true]} />Select all</SmallButton>
            <SmallButton><Squares on={[false, false, false, false]} />Select none</SmallButton>
            <SmallButton><Squares on={[false, true, true, false]} />Invert selection</SmallButton>
          </Stack>
        </GroupBody>
        <GroupName>Select</GroupName>
      </Group>
    </Ribbon>
  );
}

function FileList() {
  return (
    <Files>
      <FileTable>
        <colgroup>
          <col style={{ width: 14 }} /><col /><col style={{ width: 144 }} />
          <col style={{ width: 120 }} /><col style={{ width: 77 }} /><col style={{ width: 13 }} />
        </colgroup>
        <thead>
          <HeadRow>
            <th /><th>Name</th>
            <th>Date modified<SortMark width="9" height="5" viewBox="0 0 9 5"><path d="M.5 4.500 4.500.5l4 4" fill="none" stroke="#888" /></SortMark></th>
            <th>Type</th><BareHead>Size</BareHead><th />
          </HeadRow>
        </thead>
        <tbody>
          <GroupRow $h={33}><td colSpan={6}><GroupLine><Chevron size={13} stroke={1} color="#555" />Today (1)</GroupLine></td></GroupRow>
          <FileRow $on>
            <td /><td><FileName><Acrobat />Reader_en_GVTYXXFF_install.exe</FileName></td>
            <td>3/24/2025 10:21 PM</td><td>Application</td><td>1,590 KB</td><td />
          </FileRow>
          <GroupRow $h={31}><td colSpan={6}><GroupLine><Chevron size={13} stroke={1} color="#555" />A long time ago (5)</GroupLine></td></GroupRow>
          {older.map(([name, date, type, size]) => (
            <FileRow key={name}>
              <td /><td><FileName><ImageFile />{name}</FileName></td><td>{date}</td><td>{type}</td><td>{size}</td><td />
            </FileRow>
          ))}
        </tbody>
      </FileTable>
      <HScroll>
        <Plain aria-label="Scroll left"><Chevron turn={90} /></Plain>
        <HThumb />
        <Plain aria-label="Scroll right"><Chevron turn={-90} /></Plain>
      </HScroll>
    </Files>
  );
}

function ExplorerWindow() {
  return (
    <Explorer>
      <ExplorerTitle>
        <QuickAccess>
          <DownArrow w={17} /><QuickRule />
          <Plain aria-label="Properties"><QuickIcon><CheckPage w={13} h={16} /></QuickIcon></Plain>
          <Plain aria-label="New folder"><Folder w={17} /></Plain>
          <Plain aria-label="Customize"><svg width="8" height="8" viewBox="0 0 8 8"><path d="M0 .5h8" stroke="#000" /><path d="M0 3h8L4 7z" /></svg></Plain>
        </QuickAccess>
        <ManageTab>Manage</ManageTab>
        <WindowName>Downloads</WindowName>
        <WindowControls $w={46} $end={1}>
          <Plain aria-label="Minimize"><Minus /></Plain>
          <Plain aria-label="Maximize"><svg width="10" height="10" viewBox="0 0 10 10"><path d="M.5.5h9v9h-9z" fill="none" stroke="#000" /></svg></Plain>
          <Plain aria-label="Close"><Cross /></Plain>
        </WindowControls>
      </ExplorerTitle>
      <RibbonTabs>
        <RibbonTab $w={56} $kind="file">File</RibbonTab>
        <RibbonTab $w={58} $kind="open">Home</RibbonTab>
        <RibbonTab $w={58}>Share</RibbonTab>
        <RibbonTab $w={56}>View</RibbonTab>
        <RibbonTab $w={119} $kind="tool">Application Tools</RibbonTab>
        <RibbonEnd>
          <Plain aria-label="Collapse ribbon"><Chevron turn={180} color="#999" stroke={1.3} /></Plain>
          <Plain aria-label="Help">
            <svg width="16" height="16" viewBox="0 0 16 16"><circle cx="8" cy="8" r="8" fill="#0f62b0" /><path d="M5.500 6.300C5.500 3 10.500 3 10.500 6c0 2-2.500 1.800-2.500 4M8 11v1.800" fill="none" stroke="#fff" strokeWidth="1.700" /></svg>
          </Plain>
        </RibbonEnd>
      </RibbonTabs>
      <RibbonPanel />
      <AddressRow>
        <NavButtons>
          <Plain aria-label="Back"><Arrow color="#c8c8c8" /></Plain>
          <Plain aria-label="Forward"><Arrow turn={180} color="#c8c8c8" /></Plain>
          <Plain aria-label="Recent"><Chevron color="#c8c8c8" size={8} stroke={1.5} /></Plain>
          <Plain aria-label="Up"><Arrow turn={90} color="#666" w={1.8} /></Plain>
        </NavButtons>
        <AddressBox>
          <DownArrow />
          <input aria-label="Address" defaultValue="cm" />
          <Chevron color="#666" stroke={1.3} />
        </AddressBox>
        <GoButton aria-label="Go"><Arrow turn={180} color="#666" s={12} w={2} /></GoButton>
        <SearchBox>
          <input aria-label="Search Downloads" placeholder="Search Downloads" />
          <Glass s={12} color="#666" w={2} />
        </SearchBox>
      </AddressRow>
      <Panes>
        <Tree>
          {tree.map((t) => (
            <TreeItem key={t.name} href="#" $level={t.level} $on={t.on}><IconSlot>{t.icon}</IconSlot>{t.name}</TreeItem>
          ))}
        </Tree>
        <VScroll>
          <Plain aria-label="Scroll up"><Chevron turn={180} /></Plain>
          <VThumb />
          <Plain aria-label="Scroll down"><Chevron /></Plain>
        </VScroll>
        <FileList />
      </Panes>
      <Status>
        <span>6 items</span><span>1 item selected</span><span>1.55 MB</span>
        <ViewButtons>
          <ViewButton $on aria-label="Details view">
            <svg width="16" height="14" viewBox="0 0 16 14" fill="none" stroke="#555"><path d="M.5.5h4v3h-4zM.5 5.500h4v3h-4zM.5 10.500h4v3h-4z" fill="#fff" stroke="#888" /><path d="M6 2.500h4M11.500 2.500h4M6 7.500h4M11.500 7.500h4M6 11.500h4M11.500 11.500h4" /></svg>
          </ViewButton>
          <ViewButton aria-label="Large icons view">
            <svg width="14" height="11" viewBox="0 0 14 11"><path d="M.5.5h13v10H.5z" fill="#fff" stroke="#888" /><path d="M2 2h10v7H2z" fill="#69a8e0" /><path d="M2 5c3-1 6 3 10 1.500V9H2z" fill="#234a60" /></svg>
          </ViewButton>
        </ViewButtons>
      </Status>
    </Explorer>
  );
}

function TaskbarStrip() {
  return (
    <Taskbar>
      <StartButton aria-label="Start">
        <svg width="16" height="16" viewBox="0 0 16 16"><path d="M0 2.300 6.600 1.400v6.200H0zM7.400 1.300 16 0v7.600H7.400zM0 8.400h6.600v6.200L0 13.700zM7.400 8.400H16V16l-8.600-1.300z" fill="#fff" /></svg>
      </StartButton>
      <TaskSearch><Glass s={16} color="#222" w={1.2} /><input aria-label="Type here to search" placeholder="Type here to search" /></TaskSearch>
      <Tasks>
        <TaskButton aria-label="Task view">
          <svg width="17" height="16" viewBox="0 0 17 16" fill="none" stroke="#fff"><path d="M.5 0v2.500h10V0M.5 16v-2.500h10V16M.5 4.500h10v7H.5zM14.500 0v4M14.500 8.500V16" /><path d="M13 5h3v2.500h-3z" fill="#fff" stroke="none" /></svg>
        </TaskButton>
        <TaskButton $state="running" aria-label="Microsoft Edge"><EdgeLogo /></TaskButton>
        <TaskButton $state="active" aria-label="File Explorer"><FolderTask /></TaskButton>
        <TaskButton aria-label="Firefox"><Firefox /></TaskButton>
      </Tasks>
      <Tray>
        <Plain aria-label="Show hidden icons"><Chevron turn={180} color="#fff" size={14} stroke={1} /></Plain>
        <Plain aria-label="Meet now">
          <svg width="12" height="16" viewBox="0 0 12 16" fill="none" stroke="#fff" strokeWidth="1.100"><rect x=".8" y="4.500" width="7.500" height="7" rx="1.500" /><path d="m8.500 7 2.500-1.500v5L8.500 9M2 2c2-1.600 5-1.600 7 0M2 14c2 1.600 5 1.600 7 0" /></svg>
        </Plain>
        <Plain aria-label="Network">
          <svg width="16" height="15" viewBox="0 0 16 15" fill="none" stroke="#fff" strokeWidth="1.100"><path d="M5 2.500h10.500v8H3.500V7M.6 1h4v3.500h-4zM2.500 4.500V8M9.500 10.500v3M6 13.500h7" /></svg>
        </Plain>
        <Plain aria-label="Volume">
          <svg width="17" height="14" viewBox="0 0 17 14" fill="none" stroke="#fff" strokeWidth="1.100"><path d="M1 5h2.500L7 1.500v11L3.500 9H1zM9 5c1 1 1 3 0 4M11.200 3c2 2.500 2 5.500 0 8M13.500 1c3 4 3 8 0 12" /></svg>
        </Plain>
        <Clock>10:24 PM<br />3/24/2025</Clock>
        <Notice aria-label="Notifications">
          <svg width="16" height="17" viewBox="0 0 16 17"><path d="M0 0h16v12h-8l-4 4v-4H0z" fill="#fff" /><path d="M3 3.500h10M3 6h10M3 8.500h7" stroke="#020919" /></svg>
          <Badge>1</Badge>
        </Notice>
        <ShowDesktop />
      </Tray>
    </Taskbar>
  );
}

export default function App() {
  return (
    <Desktop>
      <GlobalStyle />
      <BrowserWindow />
      <TaskbarStrip />
      <ExplorerWindow />
      <Watermark>
        <span>ANY</span>
        <svg width="54" height="62" viewBox="0 0 54 62" fill="none" stroke="#fff" strokeWidth="4">
          <path d="M3 44V6M11 34V3l40 27-36 24M11 60l40-26M18 18v24l20-12z" />
        </svg>
        <span>RUN</span>
      </Watermark>
    </Desktop>
  );
}
